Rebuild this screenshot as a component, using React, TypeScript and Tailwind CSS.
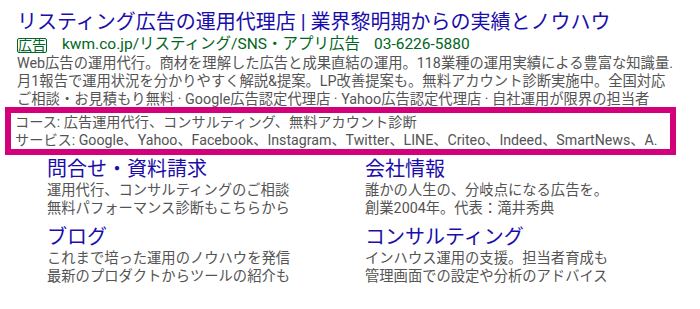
const font = { fontFamily: "Roboto, 'Noto Sans CJK JP', sans-serif" };

const sitelinks = [
  [
    { title: "問合せ・資料請求", lines: ["運用代行、コンサルティングのご相談", "無料パフォーマンス診断もこちらから"] },
    { title: "ブログ", lines: ["これまで培った運用のノウハウを発信", "最新のプロダクトからツールの紹介も"] },
  ],
  [
    { title: "会社情報", lines: ["誰かの人生の、分岐点になる広告を。", "創業2004年。代表：滝井秀典"] },
    { title: "コンサルティング", lines: ["インハウス運用の支援。担当者育成も", "管理画面での設定や分析のアドバイス"] },
  ],
];

function Sitelink({ title, lines }: { title: string; lines: string[] }) {
  return (
    <div>
      <div className="text-[20px] leading-[24px] text-[#1a0dab] whitespace-nowrap">{title}</div>
      {lines.map((l) => (
        <div key={l} className="text-[14.3px] leading-[18px] text-[#545454] whitespace-nowrap">
          {l}
        </div>
      ))}
    </div>
  );
}

export default function App() {
  return (
    <div className="w-[700px] h-[309px] bg-white overflow-hidden pt-[8px]" style={font}>
      <div className="pl-[17px]">
        <div className="text-[20px] leading-[28px] text-[#1a0dab] whitespace-nowrap">
          リスティング広告の運用代理店 | 業界黎明期からの実績とノウハウ
        </div>
        <div className="flex items-center h-[18px] text-[15.5px] text-[#006621] whitespace-nowrap">
          <span className="border border-[#006621] rounded-[2px] text-[14px] leading-[13px] h-[15px] w-[30px] flex items-center justify-center mr-[15px]">
            広告
          </span>
          <span>kwm.co.jp/リスティング/SNS・アプリ広告</span>
          <span className="ml-[14px]">03-6226-5880</span>
        </div>
        <div className="text-[14.3px] leading-[18px] text-[#545454] whitespace-nowrap">
          <div>Web広告の運用代行。商材を理解した広告と成果直結の運用。118業種の運用実績による豊富な知識量.</div>
          <div>月1報告で運用状況を分かりやすく解説&amp;提案。LP改善提案も。無料アカウント診断実施中。全国対応</div>
          <div className="h-[17px] overflow-hidden">ご相談・お見積もり無料 · Google広告認定代理店 · Yahoo広告認定代理店 · 自社運用が限界の担当者</div>
        </div>
      </div>
      <div className="ml-[5px] w-[671px] border-[6px] border-[#d4007a] bg-white">
        <div className="pl-[4px] text-[14.2px] leading-[18px] text-[#545454] whitespace-nowrap overflow-hidden">
          <div>コース: 広告運用代行、コンサルティング、無料アカウント診断</div>
          <div>サービス: Google、Yahoo、Facebook、Instagram、Twitter、LINE、Criteo、Indeed、SmartNews、A.</div>
        </div>
      </div>
      <div className="flex pl-[47px] pt-[2px]">
        {sitelinks.map((col, i) => (
          <div key={i} className={i === 0 ? "w-[318px] flex flex-col gap-[8px]" : "flex flex-col gap-[8px]"}>
            {col.map((s) => (
              <Sitelink key={s.title} title={s.title} lines={s.lines} />
            ))}
          </div>
        ))}
      </div>
    </div>
  );
}
